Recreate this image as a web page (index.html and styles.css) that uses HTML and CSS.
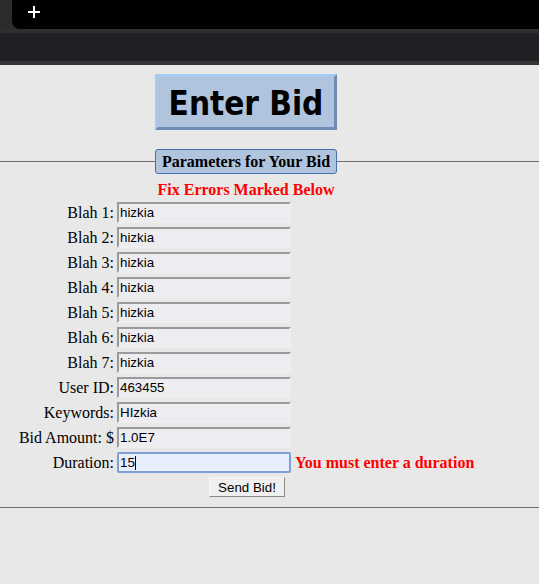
FILE: index.html
```html
<!DOCTYPE html>
<html lang="en">
<head>
<meta charset="utf-8">
<title>Enter Bid</title>
<link rel="stylesheet" href="styles.css">
</head>
<body>
<div class="chrome">
  <div class="tabstrip">
    <div class="tabstrip-edge"></div>
    <div class="tab">
      <svg class="newtab" width="12" height="12" viewBox="0 0 12 12" aria-label="New tab"><rect x="5" y="0" width="2" height="12" fill="#fff"/><rect x="0" y="5" width="12" height="2" fill="#fff"/></svg>
    </div>
  </div>
  <div class="tabline"></div>
  <div class="toolbar"></div>
  <div class="toolbar-edge"></div>
</div>
<main class="page">
  <div class="title-wrap"><h1 class="title">Enter Bid</h1></div>
  <form class="bid-form">
    <section class="params">
      <div class="params-head">
        <span class="rule rule-left"></span>
        <h2 class="params-legend">Parameters for Your Bid</h2>
        <span class="rule"></span>
      </div>
      <div class="content">
        <p class="errors">Fix Errors Marked Below</p>
        <div class="grid">
          <label class="lbl" for="b1">Blah 1:</label><input class="field" id="b1" type="text" value="hizkia"><span></span>
          <label class="lbl" for="b2">Blah 2:</label><input class="field" id="b2" type="text" value="hizkia"><span></span>
          <label class="lbl" for="b3">Blah 3:</label><input class="field" id="b3" type="text" value="hizkia"><span></span>
          <label class="lbl" for="b4">Blah 4:</label><input class="field" id="b4" type="text" value="hizkia"><span></span>
          <label class="lbl" for="b5">Blah 5:</label><input class="field" id="b5" type="text" value="hizkia"><span></span>
          <label class="lbl" for="b6">Blah 6:</label><input class="field" id="b6" type="text" value="hizkia"><span></span>
          <label class="lbl" for="b7">Blah 7:</label><input class="field" id="b7" type="text" value="hizkia"><span></span>
          <label class="lbl" for="uid">User ID:</label><input class="field" id="uid" type="text" value="463455"><span></span>
          <label class="lbl" for="kw">Keywords:</label><input class="field" id="kw" type="text" value="HIzkia"><span></span>
          <label class="lbl" for="amt">Bid Amount: $</label><input class="field" id="amt" type="text" value="1.0E7"><span></span>
          <label class="lbl" for="dur">Duration:</label><span class="field-wrap"><input class="field focused" id="dur" type="text" value="15"><span class="caret"></span></span><span class="field-error">You must enter a duration</span>
        </div>
        <div class="actions"><button class="send" type="button">Send Bid!</button></div>
      </div>
    </section>
  </form>
</main>
</body>
</html>
```
FILE: styles.css
```css
* { box-sizing: border-box; }
html, body { margin: 0; padding: 0; }
body {
  background: #e8e8e8;
  font-family: "Liberation Serif", "Times New Roman", serif;
  font-size: 16px;
  color: #000;
  width: 539px;
  height: 584px;
  overflow: hidden;
}

/* browser chrome */
.chrome { background: #202124; }
.tabstrip { height: 29px; display: flex; background: #2c2c2c; }
.tabstrip-edge { width: 12px; }
.tab {
  flex: 1;
  background: #000;
  border-bottom-left-radius: 8px;
  padding: 6px 0 0 16px;
}
.newtab { display: block; }
.tabline { height: 4px; background: #2e2e2e; }
.toolbar { height: 28px; background: #202124; }
.toolbar-edge { height: 4px; background: #353535; }

/* page */
.page { padding-top: 9px; }
.title-wrap { width: 460px; margin-left: 16px; text-align: center; }
.title {
  display: inline-block;
  margin: 0;
  width: 182px;
  height: 56px;
  padding-top: 2px;
  background: #b0c4de;
  border: 3px solid;
  border-color: #a6cbf2 #6d8db4 #6d8db4 #a6cbf2;
  font-family: "DejaVu Sans Condensed", "DejaVu Sans", sans-serif;
  font-stretch: condensed;
  font-weight: bold;
  font-size: 33px;
  line-height: 50px;
  white-space: nowrap;
}

.params {
  padding-bottom: 10px;
  border-bottom: 1px solid #6e6e6e;
}
.params-head {
  display: flex;
  align-items: center;
  height: 25px;
  margin-top: 19px;
}
.rule { flex: 1; height: 0; border-top: 1px solid #6e6e6e; }
.rule-left { flex: none; width: 155px; }
.params-legend {
  flex: none;
  margin: 0;
  width: 182px;
  height: 25px;
  text-align: center;
  background: #b0c4de;
  border: 1px solid #4a70a8;
  border-radius: 3px;
  font-size: 16px;
  font-weight: bold;
  line-height: 23px;
  white-space: nowrap;
}
.content { width: 460px; margin-left: 16px; }
.errors {
  margin: 7px 0 0;
  text-align: center;
  color: #f00;
  font-weight: bold;
  line-height: 18px;
}
.grid {
  display: grid;
  grid-template-columns: 97px 174px auto;
  column-gap: 3px;
  row-gap: 4px;
  margin: 3px 0 0 1px;
  align-items: center;
}
.lbl { text-align: right; white-space: nowrap; line-height: 18px; }
.field {
  display: block;
  width: 174px;
  height: 21px;
  margin: 0;
  padding: 1px 1px;
  font-family: "Liberation Sans", Arial, sans-serif;
  font-size: 13.33px;
  color: #000;
  background: #ededf1;
  border: 2px solid;
  border-color: #9a9a9a #eeeeee #eeeeee #9a9a9a;
  border-radius: 0;
  outline: none;
}
.field-wrap { position: relative; display: block; width: 174px; }
.field.focused {
  background: #e8effc;
  border-color: #7f9fd6;
  border-radius: 2px;
}
.caret {
  position: absolute;
  left: 18px;
  top: 4px;
  width: 1px;
  height: 14px;
  background: #000;
}
.field-error {
  margin-left: 1px;
  color: #f00;
  font-weight: bold;
  line-height: 18px;
  white-space: nowrap;
}
.actions { margin-top: 4px; padding-left: 2px; text-align: center; }
.send {
  width: 76px;
  height: 20px;
  padding: 0;
  font-family: "Liberation Sans", Arial, sans-serif;
  font-size: 13.33px;
  color: #000;
  background: #efefef;
  border: 1px solid;
  border-color: #f6f6f6 #8a8a8a #8a8a8a #f6f6f6;
  border-radius: 0;
}
```
